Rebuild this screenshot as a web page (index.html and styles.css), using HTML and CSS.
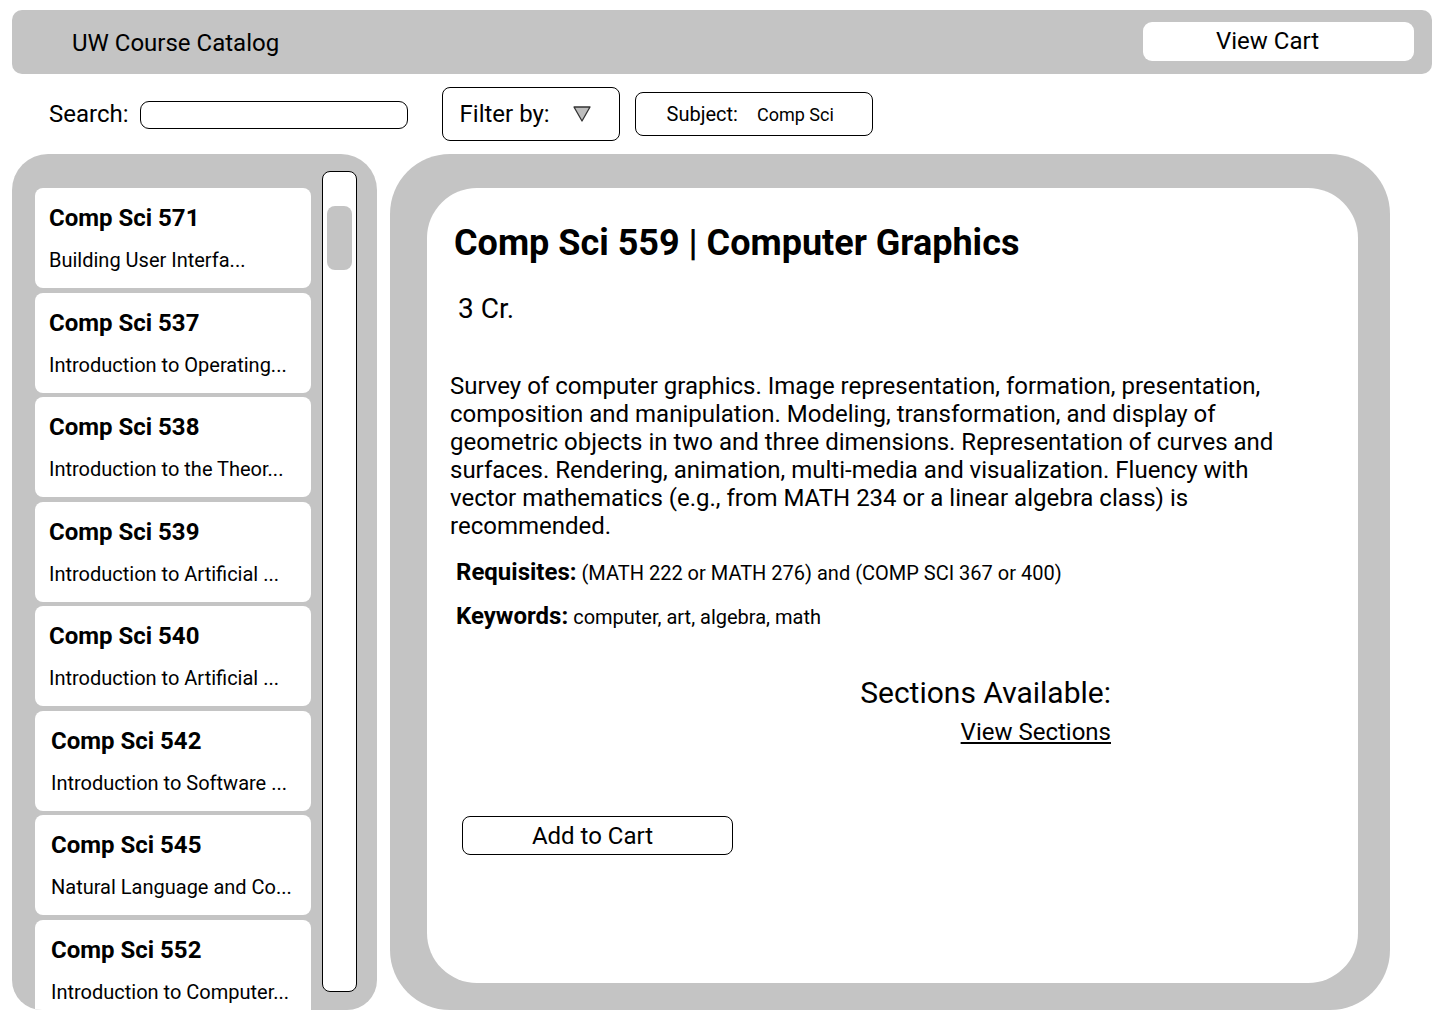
FILE: index.html
```html
<!DOCTYPE html>
<html lang="en">
<head>
  <meta charset="UTF-8" />
  <title>UW Course Catalog</title>
  <link rel="stylesheet" href="styles.css">
</head>
<body>

  <header class="topbar">
    <h1 class="brand">UW Course Catalog</h1>
    <button class="cart-btn">View Cart</button>
  </header>

  <div class="toolbar">
    <label class="search">Search: <input type="text" class="search-input" /></label>
    <div class="filter">
      <span>Filter by:</span>
      <svg width="20" height="18" viewBox="0 0 20 18"><polygon points="2,2 18,2 10,16" fill="#bdbdbd" stroke="#333" stroke-width="1.3" stroke-linejoin="round"/></svg>
    </div>
    <div class="chip"><span class="chip-key">Subject:</span><span class="chip-val">Comp Sci</span></div>
  </div>

  <main class="main">
    <aside class="sidebar">
      <div class="course-list">
        <div class="course"><div class="course-num">Comp Sci 571</div><div class="course-name">Building User Interfa...</div></div>
        <div class="course"><div class="course-num">Comp Sci 537</div><div class="course-name">Introduction to Operating...</div></div>
        <div class="course"><div class="course-num">Comp Sci 538</div><div class="course-name">Introduction to the Theor...</div></div>
        <div class="course"><div class="course-num">Comp Sci 539</div><div class="course-name">Introduction to Artificial ...</div></div>
        <div class="course"><div class="course-num">Comp Sci 540</div><div class="course-name">Introduction to Artificial ...</div></div>
        <div class="course shifted"><div class="course-num">Comp Sci 542</div><div class="course-name">Introduction to Software ...</div></div>
        <div class="course shifted"><div class="course-num">Comp Sci 545</div><div class="course-name">Natural Language and Co...</div></div>
        <div class="course shifted"><div class="course-num">Comp Sci 552</div><div class="course-name">Introduction to Computer...</div></div>
      </div>
      <div class="scrollbar"><div class="thumb"></div></div>
    </aside>

    <section class="detail">
      <div class="detail-card">
        <h2 class="title">Comp Sci 559 | Computer Graphics</h2>
        <div class="credits">3 Cr.</div>
        <p class="desc">Survey of computer graphics. Image representation, formation, presentation, composition and manipulation. Modeling, transformation, and display of geometric objects in two and three dimensions. Representation of curves and surfaces. Rendering, animation, multi-media and visualization. Fluency with vector mathematics (e.g., from MATH 234 or a linear algebra class) is recommended.</p>
        <div class="meta"><b>Requisites:</b> <span>(MATH 222 or MATH 276) and (COMP SCI 367 or 400)</span></div>
        <div class="meta"><b>Keywords:</b> <span>computer, art, algebra, math</span></div>
        <div class="sections">
          <div class="sections-label">Sections Available:</div>
          <a class="sections-link" href="#">View Sections</a>
        </div>
        <button class="add-btn">Add to Cart</button>
      </div>
    </section>
  </main>

</body>
</html>
```

FILE: styles.css
```css
* { box-sizing: border-box; font-family: Roboto, 'Liberation Sans', sans-serif; }
body {
  margin: 0;
  background: #fff;
  color: #000;
  width: 1440px;
  height: 1024px;
  overflow: hidden;
}

/* top bar */
.topbar {
  margin: 10px 8px 0 12px;
  height: 64px;
  background: #c4c4c4;
  border-radius: 10px;
  display: flex;
  align-items: center;
  justify-content: space-between;
  padding: 0 18px 0 60px;
}
.brand { margin: 2px 0 0; font-size: 24px; font-weight: 400; }
.cart-btn {
  width: 271px;
  height: 39px;
  margin-top: -2px;
  padding: 0 22px 0 0;
  background: #fff;
  border: none;
  border-radius: 9px;
  font-size: 24px;
}

/* search + filters */
.toolbar {
  display: flex;
  align-items: center;
  height: 80px;
  padding-left: 49px;
}
.search { font-size: 24px; display: flex; align-items: center; gap: 11px; }
.search-input {
  width: 268px;
  height: 28px;
  border: 1px solid #000;
  border-radius: 9px;
  margin-top: 2px;
}
.filter {
  margin-left: 34px;
  width: 178px;
  height: 54px;
  border: 1px solid #000;
  border-radius: 8px;
  display: flex;
  align-items: center;
  padding: 0 17px;
  gap: 22px;
  font-size: 24px;
}
.chip {
  margin-left: 15px;
  width: 238px;
  height: 44px;
  border: 1px solid #000;
  border-radius: 8px;
  display: flex;
  align-items: center;
  padding-left: 31px;
}
.chip-key { font-size: 20px; }
.chip-val { font-size: 18px; margin-left: 19px; }

/* main area */
.main {
  display: flex;
  gap: 13px;
  padding-left: 12px;
}
.sidebar {
  width: 365px;
  height: 856px;
  background: #c4c4c4;
  border-radius: 36px 36px 30px 30px;
  display: flex;
  padding: 17px 0 0 23px;
  gap: 11px;
  overflow: hidden;
}
.course-list {
  width: 276px;
  display: flex;
  flex-direction: column;
  gap: 4.5px;
  padding-top: 17px;
}
.course {
  flex-shrink: 0;
  height: 100px;
  background: #fff;
  border-radius: 8px;
  padding: 15px 14px 0;
}
.course.shifted { padding-left: 16px; }
.course-num { font-size: 24px; font-weight: 700; line-height: 30px; }
.course-name { font-size: 20px; line-height: 24px; margin-top: 15px; }
.scrollbar {
  width: 35px;
  height: 821px;
  background: #fff;
  border: 1px solid #000;
  border-radius: 8px;
  padding: 34px 4px 0;
}
.thumb {
  height: 64px;
  background: #c4c4c4;
  border-radius: 8px;
}

/* detail */
.detail {
  width: 1000px;
  height: 856px;
  background: #c4c4c4;
  border-radius: 60px;
  padding: 34px 32px 27px 37px;
}
.detail-card {
  height: 100%;
  background: #fff;
  border-radius: 50px;
  padding: 30px 40px 0 23px;
}
.title { margin: 0 0 0 4px; font-size: 36px; font-weight: 700; line-height: 50px; }
.credits { font-size: 28px; margin: 24px 0 0 8px; line-height: 34px; }
.desc {
  font-size: 24px;
  line-height: 28px;
  margin: 46px 0 0;
  width: 840px;
}
.meta { font-size: 20px; margin: 18px 0 0 6px; line-height: 28px; }
.meta + .meta { margin-top: 15px; }
.meta b { font-size: 24px; }
.sections {
  width: 638px;
  margin: 45px 0 0 23px;
  display: flex;
  flex-direction: column;
  align-items: flex-end;
}
.sections-label { font-size: 30px; line-height: 34px; }
.sections-link { font-size: 24px; color: #000; margin-top: 8px; line-height: 28px; }
.add-btn {
  margin: 70px 0 0 12px;
  width: 271px;
  height: 39px;
  padding: 0 10px 0 0;
  background: #fff;
  border: 1px solid #000;
  border-radius: 8px;
  font-size: 24px;
}
```
